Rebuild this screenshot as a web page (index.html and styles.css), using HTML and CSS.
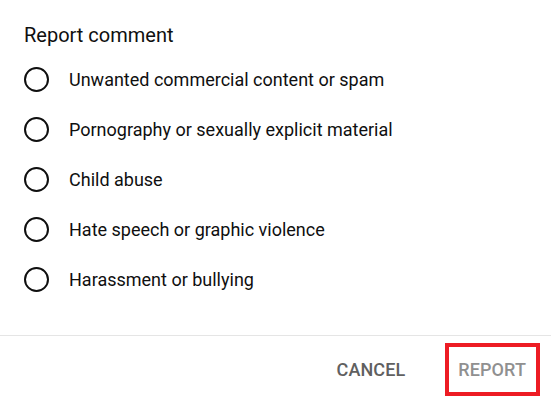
FILE: index.html
```html
<!DOCTYPE html>
<html lang="en">
  <head>
    <meta charset="utf-8">
    <title>Report comment</title>
    <link rel="stylesheet" href="styles.css">
  </head>
  <body>
    <div class="dialog">
      <div class="dialog_title">Report comment</div>
      <div class="options">
        <label class="option"><span class="radio"></span><span class="option_text">Unwanted commercial content or spam</span></label>
        <label class="option"><span class="radio"></span><span class="option_text">Pornography or sexually explicit material</span></label>
        <label class="option"><span class="radio"></span><span class="option_text">Child abuse</span></label>
        <label class="option"><span class="radio"></span><span class="option_text">Hate speech or graphic violence</span></label>
        <label class="option"><span class="radio"></span><span class="option_text">Harassment or bullying</span></label>
      </div>
      <div class="actions">
        <div class="bt bt_cancel">CANCEL</div>
        <div class="bt bt_report">REPORT</div>
      </div>
    </div>
  </body>
</html>
```

FILE: styles.css
```css
html, body {
  margin:0;
  padding:0;
  background:#fff;
}
body {
  font-family: Roboto, 'Liberation Sans', sans-serif;
  color:#0f0f0f;
}
.dialog {
  width:551px;
  height:402px;
  display:flex;
  flex-direction:column;
}
.dialog_title {
  font-size:20px;
  line-height:24px;
  padding:23px 24px 0;
}
.options {
  display:flex;
  flex-direction:column;
  padding:7px 0 0 24px;
}
.option {
  display:flex;
  align-items:center;
  height:50px;
  font-size:18px;
}
.radio {
  box-sizing:border-box;
  width:25px;
  height:25px;
  border:2px solid #0f0f0f;
  border-radius:50%;
  margin-right:20px;
}
.actions {
  margin-top:31px;
  border-top:1px solid #e5e5e5;
  display:flex;
  justify-content:flex-end;
  align-items:center;
  padding:7px 11px 0 0;
}
.bt {
  font-size:18px;
  font-weight:500;
  line-height:21px;
  letter-spacing:0.1px;
  user-select:none;
  cursor:pointer;
}
.bt_cancel {
  color:#606060;
  padding:16px 40px 16px 0;
}
.bt_report {
  color:#909090;
  border:4px solid #ed1c24;
  padding:12px 10px 12px 9px;
}
```
